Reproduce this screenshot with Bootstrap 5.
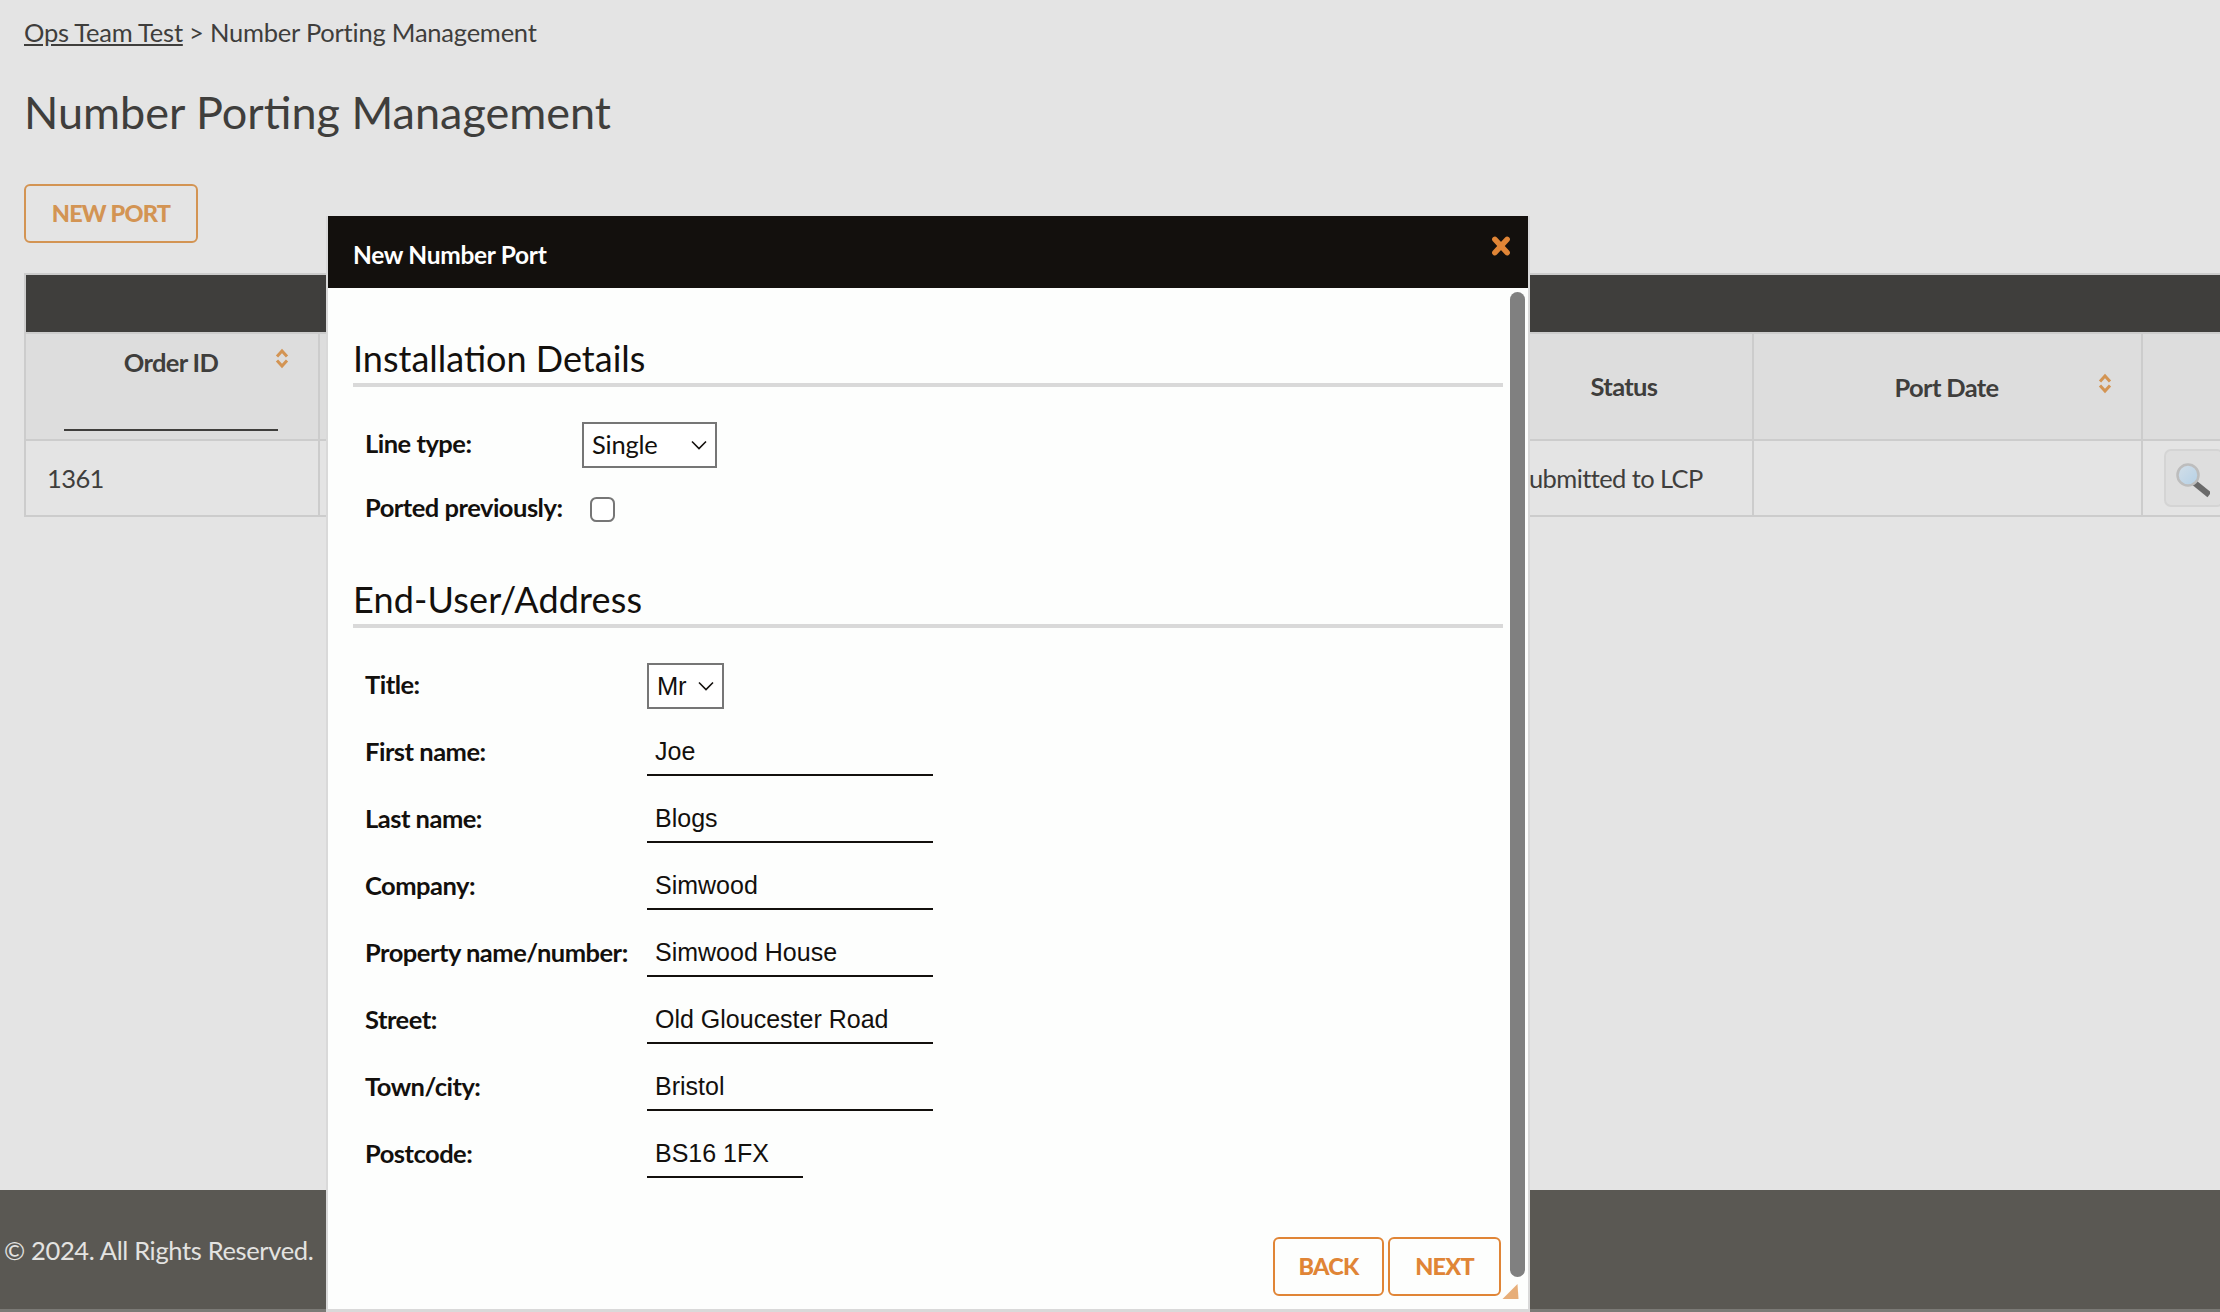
<!DOCTYPE html>
<html lang="en">
<head>
<meta charset="utf-8">
<title>Number Porting Management</title>
<link rel="stylesheet" href="https://cdn.jsdelivr.net/npm/bootstrap@5.3.0/dist/css/bootstrap.min.css">
<style>
html,body{height:100%;}
body{margin:0;background:#e4e4e4;color:#3f3e3c;font-family:Lato,"Noto Sans",sans-serif;font-size:25.5px;overflow:hidden;position:relative;}
.np-page{height:100vh;}
.np-main{padding:18px 0 0 24px;overflow:hidden;}
.np-crumb{line-height:29px;color:#3f3e3c;letter-spacing:-.22px;padding-bottom:1px;}
.np-crumb a{color:#3f3e3c;}
.np-title{font-size:45px;font-weight:400;line-height:56px;margin:36px 0 44px;color:#3f3e3c;}
.np-btn{font-size:23.5px;font-weight:900;line-height:1;letter-spacing:-.8px;border-width:2px;border-style:solid;border-radius:6px;background:transparent;text-transform:uppercase;padding:0;height:59px;display:inline-flex;align-items:center;justify-content:center;}
.np-btn-dim{width:174px;color:#d39453;border-color:#d39453;}
.np-btn-hot{color:#e08536;border-color:#e08536;}
.np-btn-hot:hover,.np-btn-dim:hover{color:#e08536;border-color:#e08536;background:transparent;}
.np-table{--bs-table-bg:transparent;--bs-table-color:#3f3e3c;--bs-table-border-color:#cccccc;width:2275px;table-layout:fixed;margin:30px 0 0;border:2px solid #ccc;border-collapse:collapse;}
.np-table>*>*>*{border:2px solid #ccc;padding:0;}
.np-c1{width:294px}.np-c2{width:1178px}.np-c3{width:256px}.np-c4{width:389px}.np-c5{width:158px}
.np-bar th{background:#3f3e3c;height:59px;}
.np-head th{background:#dddddd;height:107px;text-align:center;vertical-align:middle;font-weight:700;letter-spacing:-.65px;padding:0 40px 0 38px;}
.np-head th.np-top{vertical-align:top;padding-top:13px;}
.np-sortwrap{position:relative;line-height:30px;}
.np-sort{position:absolute;right:-11px;top:1px;width:14px;height:21px;display:block;}
.np-filter{display:block;width:100%;height:46px;margin-top:8px;background:transparent;border:0;border-bottom:2px solid #3f3e3c;}
.np-row td{height:76px;vertical-align:middle;padding:0 0 0 21px;font-weight:400;letter-spacing:-.6px;}
.np-row td.np-status{padding-left:18px;}
.np-row td.np-act{padding:0 0 0 21px;}
.np-search{width:60px;height:58px;background:#dedede;border:2px solid #d4d4d4;border-radius:7px;padding:0 0 0 8px;display:flex;align-items:center;}
.np-foot{height:122px;background:#5a5853;color:#e3e3e1;border-bottom:3px solid #7b7a76;padding:2px 0 0 4px;letter-spacing:-.35px;}
.np-modal{position:absolute;left:326px;top:216px;width:1204px;height:1096px;border:0;border-left:2px solid #d9d9d9;border-right:2px solid #d9d9d9;border-bottom:3px solid #d9d9d9;border-radius:0;background:#fdfefd;color:#13100d;}
.np-mhead{height:72px;background:#13100d;color:#fff;font-weight:700;font-size:24.5px;letter-spacing:-.3px;padding:24px 0 0 25px;line-height:30px;border:0;border-radius:0 !important;position:relative;}
.np-x{position:absolute;right:17px;top:20px;width:20px;height:20px;display:block;}
.np-mbody{padding:48px 25px 0;}
.np-h{font-size:36px;font-weight:400;line-height:45px;padding-bottom:2px;margin:0;border-bottom:4px solid #d9d9d9;color:#13100d;}
.np-h2{margin-top:45px;letter-spacing:.15px;}
.np-field{padding-left:12px;display:flex;align-items:center;min-height:46px;}
.np-lab{font-weight:700;margin:0;flex:none;letter-spacing:-.5px;padding-bottom:3px;}
.np-w1{width:217px;}
.np-w2{width:282px;}
.np-rows{display:flex;flex-direction:column;}
.np-first{margin-top:35px;}
.np-second{margin-top:18px;}
.np-gap{margin-top:21px;}
.np-sel{border:2px solid #767676;border-radius:0;height:46px;font-size:25.5px;letter-spacing:-.2px;color:#13100d;background-color:#fff;padding:0 30px 0 8px;
background-image:url("data:image/svg+xml,%3csvg xmlns='http://www.w3.org/2000/svg' viewBox='0 0 16 12'%3e%3cpath fill='none' stroke='%2313100d' stroke-width='1.6' d='M1 2.5 8 9.5l7-7'/%3e%3c/svg%3e");
background-position:right 8px center;background-size:16px 12px;font-family:inherit;line-height:1;}
.np-sel:focus,.np-in:focus{box-shadow:none;border-color:#767676;}
.np-sel1{width:135px;}
.np-sel2{width:77px;font-family:"Liberation Sans",Arial,sans-serif;padding-top:2px;}
.np-check{width:25px;height:25px;margin:0 0 0 8px;border:2px solid #767676;border-radius:5px;background:#fff;}
.np-in{font-family:"Liberation Sans",Arial,sans-serif;font-size:25px;color:#13100d;background:transparent;border:0;border-bottom:2px solid #13100d;border-radius:0;padding:0 8px 1px;height:46px;width:286px;flex:none;}
.np-in:focus{background:transparent;border-color:#13100d;color:#13100d;}
.np-in-s{width:156px;}
.np-actions{margin-top:59px;padding-right:2px;gap:4px;}
.np-back{width:111px;}
.np-next{width:113px;}
.np-scroll{position:absolute;left:1182px;top:76px;width:15px;height:985px;background:#808080;border-radius:8px;}
.np-grip{position:absolute;left:1174px;top:1068px;width:17px;height:15px;display:block;}
</style>
</head>
<body>
<div class="np-page d-flex flex-column">
  <main class="np-main flex-grow-1">
    <div class="np-crumb"><a href="#">Ops Team Test</a> &gt; Number Porting Management</div>
    <h1 class="np-title">Number Porting Management</h1>
    <button type="button" class="btn np-btn np-btn-dim">New Port</button>
    <table class="table np-table">
      <colgroup><col class="np-c1"><col class="np-c2"><col class="np-c3"><col class="np-c4"><col class="np-c5"></colgroup>
      <thead>
        <tr class="np-bar"><th colspan="5"></th></tr>
        <tr class="np-head">
          <th class="np-top">
            <div class="np-sortwrap">Order ID
              <svg class="np-sort" viewBox="0 0 14 21" fill="none" stroke="#d39453" stroke-width="3"><path d="M2 8.500 7 3l5 5.500"/><path d="M2 12.500 7 18l5-5.500"/></svg>
            </div>
            <input class="np-filter" type="text" aria-label="Filter by order ID">
          </th>
          <th></th>
          <th>Status</th>
          <th>
            <div class="np-sortwrap">Port Date
              <svg class="np-sort" viewBox="0 0 14 21" fill="none" stroke="#d39453" stroke-width="3"><path d="M2 8.500 7 3l5 5.500"/><path d="M2 12.500 7 18l5-5.500"/></svg>
            </div>
          </th>
          <th></th>
        </tr>
      </thead>
      <tbody>
        <tr class="np-row">
          <td>1361</td>
          <td></td>
          <td class="np-status">Submitted to LCP</td>
          <td></td>
          <td class="np-act">
            <button type="button" class="np-search" aria-label="View">
              <svg width="36" height="40" viewBox="0 0 36 40">
                <defs><linearGradient id="npLens" x1="0" y1="0" x2="1" y2="1"><stop offset="0" stop-color="#d4dfe8"/><stop offset="1" stop-color="#b4d0e6"/></linearGradient></defs>
                <path d="M22 26 33 35" stroke="#6a6a6a" stroke-width="6" stroke-linecap="square"/>
                <circle cx="14" cy="17" r="10.500" fill="url(#npLens)" stroke="#bdbdbd" stroke-width="2.500"/>
              </svg>
            </button>
          </td>
        </tr>
      </tbody>
    </table>
  </main>
  <footer class="np-foot d-flex align-items-center">© 2024. All Rights Reserved.</footer>
</div>

<section class="card np-modal">
  <div class="card-header np-mhead">New Number Port
    <svg class="np-x" viewBox="0 0 18 18" stroke="#e08536" stroke-width="5" stroke-linecap="round"><path d="M3.500 3 14.500 15"/><path d="M14.500 3 3.500 15"/></svg>
  </div>
  <div class="np-mbody">
    <h2 class="np-h">Installation Details</h2>
    <div class="np-rows">
      <div class="np-field np-first">
        <label class="np-lab np-w1">Line type:</label>
        <select class="form-select np-sel np-sel1"><option>Single</option></select>
      </div>
      <div class="np-field np-second">
        <label class="np-lab np-w1">Ported previously:</label>
        <input class="form-check-input np-check" type="checkbox" aria-label="Ported previously">
      </div>
    </div>
    <h2 class="np-h np-h2">End-User/Address</h2>
    <div class="np-rows">
      <div class="np-field np-first">
        <label class="np-lab np-w2">Title:</label>
        <select class="form-select np-sel np-sel2"><option>Mr</option></select>
      </div>
      <div class="np-field np-gap"><label class="np-lab np-w2">First name:</label><input class="form-control np-in" value="Joe"></div>
      <div class="np-field np-gap"><label class="np-lab np-w2">Last name:</label><input class="form-control np-in" value="Blogs"></div>
      <div class="np-field np-gap"><label class="np-lab np-w2">Company:</label><input class="form-control np-in" value="Simwood"></div>
      <div class="np-field np-gap"><label class="np-lab np-w2">Property name/number:</label><input class="form-control np-in" value="Simwood House"></div>
      <div class="np-field np-gap"><label class="np-lab np-w2">Street:</label><input class="form-control np-in" value="Old Gloucester Road"></div>
      <div class="np-field np-gap"><label class="np-lab np-w2">Town/city:</label><input class="form-control np-in" value="Bristol"></div>
      <div class="np-field np-gap"><label class="np-lab np-w2">Postcode:</label><input class="form-control np-in np-in-s" value="BS16 1FX"></div>
    </div>
    <div class="d-flex justify-content-end np-actions">
      <button type="button" class="btn np-btn np-btn-hot np-back">Back</button>
      <button type="button" class="btn np-btn np-btn-hot np-next">Next</button>
    </div>
  </div>
  <div class="np-scroll"></div>
  <svg class="np-grip" viewBox="0 0 16 15"><defs><pattern id="npDots" width="2" height="2" patternUnits="userSpaceOnUse"><rect width="2" height="2" fill="#eec9a4"/><rect width="1" height="1" fill="#e0934e"/><rect x="1" y="1" width="1" height="1" fill="#e0934e"/></pattern></defs><polygon points="0,15 15,0 16,15" fill="url(#npDots)"/></svg>
</section>
</body>
</html>
